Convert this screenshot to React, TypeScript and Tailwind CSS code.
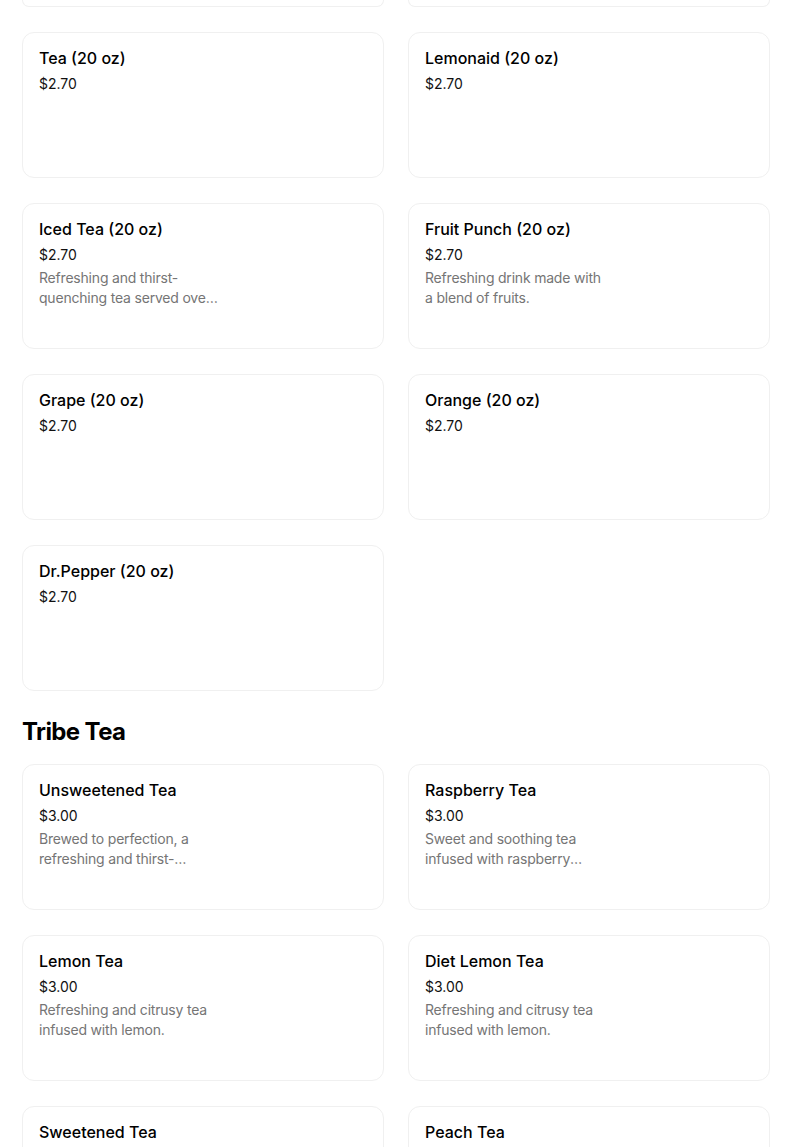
import React from "react";

type Item = { name: string; price: string; desc?: string };

const drinks: Item[] = [
  { name: "Tea (20 oz)", price: "$2.70" },
  { name: "Lemonaid (20 oz)", price: "$2.70" },
  {
    name: "Iced Tea (20 oz)",
    price: "$2.70",
    desc: "Refreshing and thirst-quenching tea served over ice.",
  },
  {
    name: "Fruit Punch (20 oz)",
    price: "$2.70",
    desc: "Refreshing drink made with a blend of fruits.",
  },
  { name: "Grape (20 oz)", price: "$2.70" },
  { name: "Orange (20 oz)", price: "$2.70" },
  { name: "Dr.Pepper (20 oz)", price: "$2.70" },
];

const tribeTea: Item[] = [
  {
    name: "Unsweetened Tea",
    price: "$3.00",
    desc: "Brewed to perfection, a refreshing and thirst-quenching tea.",
  },
  {
    name: "Raspberry Tea",
    price: "$3.00",
    desc: "Sweet and soothing tea infused with raspberry flavor.",
  },
  {
    name: "Lemon Tea",
    price: "$3.00",
    desc: "Refreshing and citrusy tea infused with lemon.",
  },
  {
    name: "Diet Lemon Tea",
    price: "$3.00",
    desc: "Refreshing and citrusy tea infused with lemon.",
  },
  { name: "Sweetened Tea", price: "$3.00", desc: "Classic sweet tea." },
  { name: "Peach Tea", price: "$3.00", desc: "Sweet tea with peach." },
];

function Card({ item }: { item: Item }) {
  return (
    <div className="h-[146px] rounded-xl border border-[#f0f0f0] bg-white pl-4 pr-4 pt-[15px]">
      <div className="text-[16px] leading-5 font-medium text-black">{item.name}</div>
      <div className="mt-[6px] text-[14px] leading-5 text-[#111]">{item.price}</div>
      {item.desc && (
        <div className="mt-[3px] w-[182px] text-[14px] leading-5 tracking-[-0.2px] text-[#757575] line-clamp-2">
          {item.desc}
        </div>
      )}
    </div>
  );
}

function Grid({ items, stub }: { items: Item[]; stub?: boolean }) {
  return (
    <div className="grid grid-cols-[362px_362px] gap-x-[24px] gap-y-[25px]">
      {stub && (
        <>
          <div className="h-[7px] rounded-b-xl border border-t-0 border-[#f0f0f0] bg-white" />
          <div className="h-[7px] rounded-b-xl border border-t-0 border-[#f0f0f0] bg-white" />
        </>
      )}
      {items.map((it) => (
        <Card key={it.name} item={it} />
      ))}
    </div>
  );
}

export default function App() {
  return (
    <div
      className="h-[1147px] overflow-hidden bg-white"
      style={{ fontFamily: "Inter, 'Noto Sans', sans-serif" }}
    >
      <div className="pl-[22px]">
        <Grid items={drinks} stub />
        <h2 className="mt-[25px] mb-[16px] text-[24px] leading-8 font-bold tracking-[-0.6px] text-black">
          Tribe Tea
        </h2>
        <Grid items={tribeTea} />
      </div>
    </div>
  );
}
